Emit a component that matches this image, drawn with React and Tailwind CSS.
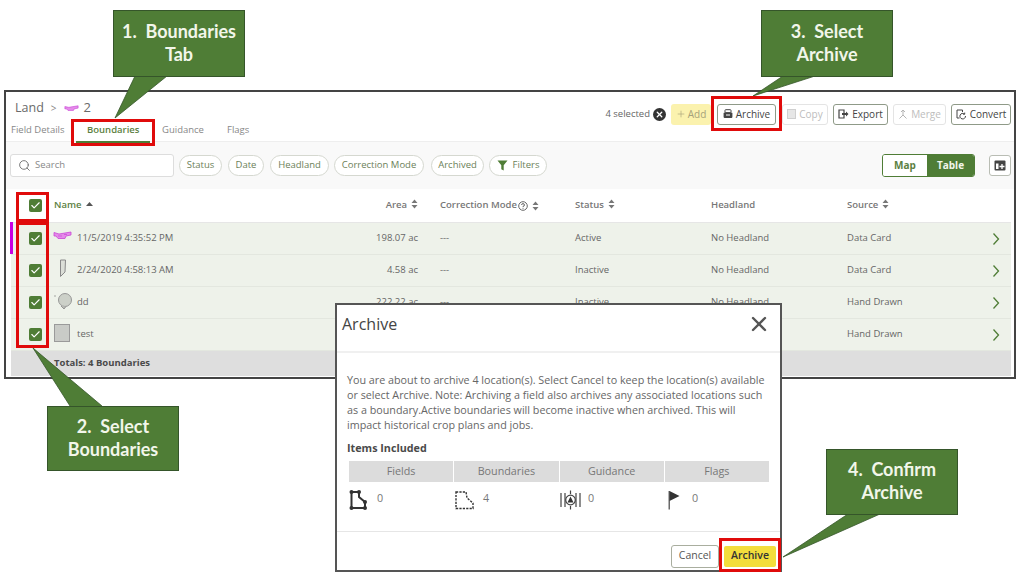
import React from "react";
import { Search, X, Check, Plus } from "lucide-react";

const FONT = "font-['Open_Sans','Noto_Sans',sans-serif]";
const COLS = "grid grid-cols-[43px_286px_78px_157px_136px_136px_148px_1fr] items-center";

const Sort = () => (
  <svg width="7" height="10" viewBox="0 0 7 10" className="inline-block ml-[4px] align-[-1px]">
    <path d="M3.5 0.5 L6.5 4 H0.5 Z M3.5 9.5 L6.5 6 H0.5 Z" fill="#777" />
  </svg>
);

const Box = () => (
  <span className="flex items-center justify-center w-[13px] h-[13px] rounded-[2px] bg-[#4f7d36] ml-[18px]">
    <Check size={11} strokeWidth={2.5} color="#fff" />
  </span>
);

const PurpleShape = () => (
  <svg width="19" height="9" viewBox="0 0 19 9" className="absolute left-[-1px] top-[0px]">
    <path d="M1 1.5 L6 3 L18 1 L18 4 L13 5 L12 7.5 L5 7.5 L3 5 L1 5 Z" fill="#e58bea" stroke="#c948d6" strokeWidth="0.8" />
    <path d="M5 5 H9 M11 3.5 H14" stroke="#c948d6" strokeWidth="0.7" />
  </svg>
);
const SliverShape = () => (
  <svg width="10" height="19" viewBox="0 0 10 19" className="absolute left-[5px] top-[-4px]">
    <path d="M1.5 1 H6.5 L6 13 L1.5 17.5 Z" fill="#dcdfd8" stroke="#8a8a8a" strokeWidth="1" />
  </svg>
);
const BlobShape = () => (
  <svg width="20" height="18" viewBox="0 0 20 18" className="absolute left-[0px] top-[-3px]">
    <circle cx="1" cy="4" r="0.7" fill="#888" />
    <circle cx="11" cy="8" r="6.5" fill="#ccd0c8" stroke="#8f8f8f" strokeWidth="0.9" />
    <path d="M7 14 L10 17 L12 14.5" fill="#b8bbb4" stroke="#8f8f8f" strokeWidth="0.9" />
  </svg>
);
const SquareShape = () => (
  <span className="absolute left-[0px] top-[-3px] w-[16px] h-[18px] bg-[#c9cbc7] border border-[#9a9a9a]" />
);

const Chevron = () => (
  <svg width="8" height="14" viewBox="0 0 8 14" className="ml-[-3px]">
    <path d="M1.5 1.5 L6.5 7 L1.5 12.5" fill="none" stroke="#4f7d36" strokeWidth="1.3" />
  </svg>
);

const rows = [
  { icon: <PurpleShape />, name: "11/5/2019 4:35:52 PM", area: "198.07 ac", dash: "---", status: "Active", head: "No Headland", source: "Data Card" },
  { icon: <SliverShape />, name: "2/24/2020 4:58:13 AM", area: "4.58 ac", dash: "---", status: "Inactive", head: "No Headland", source: "Data Card" },
  { icon: <BlobShape />, name: "dd", area: "222.22 ac", dash: "---", status: "Inactive", head: "No Headland", source: "Hand Drawn" },
  { icon: <SquareShape />, name: "test", area: "", dash: "", status: "", head: "", source: "Hand Drawn" },
];

const ActionBtn = ({ icon, label, off, cls }) => (
  <span className={`flex items-center justify-center gap-[3px] h-[21px] rounded-[3px] border bg-white text-[10px] ${off ? "border-[#e4e4e4] text-[#bdbdbd]" : "border-[#8f9a88] text-[#444]"} ${cls}`}>
    {icon}
    {label}
  </span>
);

const Chip = ({ children, cls }) => (
  <span className={`flex items-center justify-center h-[21px] rounded-full border border-[#d5d8d0] bg-white text-[9.5px] text-[#6c8159] ${cls}`}>
    {children}
  </span>
);

const Callout = ({ cls, children }) => (
  <div className={`absolute z-30 flex items-center justify-center pb-[2px] text-center bg-[#4f7d36] border border-[#35552a] text-[#f2f6ea] font-['Lato',sans-serif] font-bold text-[18px] leading-[23px] ${cls}`}>
    <span>{children}</span>
  </div>
);

const RedBox = ({ cls }) => <div className={`absolute z-40 border-[3px] border-[#e00b0b] ${cls}`} />;

export default function App() {
  return (
    <div className={`relative w-[1024px] h-[577px] bg-white overflow-hidden pt-[90px] pl-[4px] ${FONT}`}>
      {/* Main panel */}
      <div className="w-[1012px] h-[289px] border-2 border-[#444] bg-white overflow-hidden">
        {/* Header */}
        <div className="flex justify-between h-[50px] border-b border-[#eeeeee]">
          <div className="pl-[5px]">
            <div className="flex items-center pl-[4px] pt-[5px] h-[27px] text-[12.5px] text-[#6a6a6a]">
              <span>Land</span>
              <span className="ml-[7px] text-[10px] text-[#888]">&gt;</span>
              <svg width="15" height="7" viewBox="0 0 19 9" className="ml-[7px]">
                <path d="M1 2 L6 3 L18 1 L18 4 L13 5 L12 7 L5 7 L3 5 L1 5 Z" fill="#e58bea" stroke="#c948d6" strokeWidth="0.8" />
              </svg>
              <span className="ml-[5px] text-[13px]">2</span>
            </div>
            <div className="flex items-center text-[9.5px] text-[#888] h-[23px]">
              <span className="w-[76px]">Field Details</span>
              <span className="w-[75px] font-semibold text-[#5c7f42]">Boundaries</span>
              <span className="w-[65px]">Guidance</span>
              <span>Flags</span>
            </div>
          </div>
          <div className="flex items-center h-[44px] pr-[3px] text-[10px]">
            <span className="text-[#666] text-[9.5px]">4 selected</span>
            <span className="flex items-center justify-center ml-[3px] w-[13px] h-[13px] rounded-full bg-[#333]">
              <X size={9} strokeWidth={3.5} color="#fff" />
            </span>
            <span className="flex items-center justify-center ml-[5px] w-[40px] h-[21px] rounded-[3px] bg-[#fbf2ae] text-[#a6a27a]">
              <Plus size={10} strokeWidth={1.5} className="mr-[2px]" />
              Add
            </span>
            <ActionBtn
              cls="ml-[6px] w-[59px]"
              label="Archive"
              icon={
                <svg width="10" height="10" viewBox="0 0 10 10">
                  <rect x="2" y="0.7" width="6" height="3" rx="0.7" fill="none" stroke="#444" />
                  <rect x="0.6" y="3.5" width="8.8" height="5.5" rx="1" fill="#444" />
                  <rect x="3" y="5.5" width="4" height="1" fill="#fff" />
                </svg>
              }
            />
            <ActionBtn
              off
              cls="ml-[6px] w-[46px]"
              label="Copy"
              icon={
                <svg width="9" height="10" viewBox="0 0 9 10">
                  <rect x="0.5" y="0.5" width="8" height="9" fill="#e6e6e6" stroke="#cfcfcf" />
                </svg>
              }
            />
            <ActionBtn
              cls="ml-[5px] w-[55px]"
              label="Export"
              icon={
                <svg width="11" height="10" viewBox="0 0 11 10">
                  <path d="M1 1 H6 V9 H1 Z" fill="none" stroke="#444" strokeWidth="1.2" />
                  <path d="M4 4 H8 V2.5 L10.5 5 L8 7.5 V6 H4 Z" fill="#444" />
                </svg>
              }
            />
            <ActionBtn
              off
              cls="ml-[5px] w-[53px]"
              label="Merge"
              icon={
                <svg width="10" height="10" viewBox="0 0 10 10" fill="none" stroke="#b5b5b5" strokeWidth="1">
                  <path d="M5 1 V6 L1.5 9.5 M5 6 L8.5 9.5 M3 3 L5 1 L7 3" />
                </svg>
              }
            />
            <ActionBtn
              cls="ml-[5px] w-[60px]"
              label="Convert"
              icon={
                <svg width="11" height="11" viewBox="0 0 11 11" fill="none" stroke="#444" strokeWidth="1">
                  <path d="M6.5 1 H1 V9 H3.5 M6.5 1 V3" />
                  <path d="M9.5 7 A2.8 2.8 0 1 1 8.5 5 M8.7 3.6 V5.2 H7" />
                </svg>
              }
            />
          </div>
        </div>

        {/* Toolbar */}
        <div className="flex items-center h-[47px] bg-[#f9f9f9] pl-[4px] pr-[3px]">
          <div className="flex items-center w-[164px] h-[23px] rounded-[3px] border border-[#dddddd] bg-white pl-[7px] text-[9.5px] text-[#888]">
            <Search size={13} strokeWidth={1.6} color="#666" />
            <span className="ml-[4px]">Search</span>
          </div>
          <Chip cls="ml-[5px] w-[43px]">Status</Chip>
          <Chip cls="ml-[6px] w-[36px]">Date</Chip>
          <Chip cls="ml-[6px] w-[59px]">Headland</Chip>
          <Chip cls="ml-[5px] w-[90px]">Correction Mode</Chip>
          <Chip cls="ml-[7px] w-[53px]">Archived</Chip>
          <Chip cls="ml-[5px] w-[58px] gap-[5px]">
            <svg width="11" height="11" viewBox="0 0 11 11">
              <path d="M0.5 0.5 H10.5 L6.7 5.3 V10.5 L4.3 9.3 V5.3 Z" fill="#4f7d36" />
            </svg>
            Filters
          </Chip>
          <div className="flex ml-auto w-[93px] h-[23px] rounded-[3px] border border-[#4f7d36] text-[10px] font-bold overflow-hidden">
            <span className="flex items-center justify-center w-[44px] bg-white text-[#5c7f42]">Map</span>
            <span className="flex items-center justify-center flex-1 bg-[#4f7d36] text-[#f2f6ea]">Table</span>
          </div>
          <span className="flex items-center justify-center ml-[14px] w-[22px] h-[21px] rounded-[3px] border border-[#b9bdb4] bg-white">
            <svg width="12" height="11" viewBox="0 0 12 11">
              <rect x="0.5" y="0.5" width="11" height="10" rx="1" fill="#444" />
              <rect x="2" y="3.5" width="2.5" height="5.5" fill="#fff" />
              <path d="M8 4 V9 M5.5 6.5 H10.5" stroke="#fff" strokeWidth="1.3" />
            </svg>
          </span>
        </div>

        {/* Table */}
        <div className="ml-[5px] mr-[3px] text-[9.5px] text-[#666]">
          <div className={`${COLS} h-[34px] bg-white border-b border-[#e6e6e6] font-semibold`}>
            <Box />
            <span className="text-[#5c7f42]">
              Name
              <svg width="7" height="4" viewBox="0 0 7 4" className="inline-block ml-[4px] align-[2px]">
                <path d="M3.5 0 L7 4 H0 Z" fill="#555" />
              </svg>
            </span>
            <span className="text-right text-[#777]">Area<Sort /></span>
            <span className="pl-[22px] text-[#777] flex items-center">
              Correction Mode
              <svg width="10" height="10" viewBox="0 0 10 10" className="ml-[1px]">
                <circle cx="5" cy="5" r="4.3" fill="none" stroke="#666" />
                <path d="M3.6 4 A1.4 1.4 0 1 1 5 5.4 V6.2 M5 7 V7.8" fill="none" stroke="#666" />
              </svg>
              <Sort />
            </span>
            <span className="text-[#777]">Status<Sort /></span>
            <span className="text-[#777]">Headland</span>
            <span className="text-[#777]">Source<Sort /></span>
            <span />
          </div>
          {rows.map((r) => (
            <div key={r.name} className={`${COLS} h-[32px] bg-[#eef2ea] border-b border-[#e3e7df]`}>
              <Box />
              <span className="relative pl-[23px]">
                {r.icon}
                {r.name}
              </span>
              <span className="text-right">{r.area}</span>
              <span className="pl-[22px]">{r.dash}</span>
              <span>{r.status}</span>
              <span>{r.head}</span>
              <span>{r.source}</span>
              <Chevron />
            </div>
          ))}
          <div className="flex items-center h-[25px] pl-[43px] bg-[#dedede] font-bold text-[#4a4a4a]">
            Totals: 4 Boundaries
          </div>
        </div>
      </div>

      {/* Row marker */}
      <div className="absolute z-10 left-[10px] top-[222px] w-[3px] h-[32px] bg-[#c800e0]" />

      {/* Modal */}
      <div className="absolute z-20 left-[335px] top-[303px] w-[447px] h-[269px] border-2 border-[#555] bg-white flex flex-col">
        <div className="flex items-center justify-between h-[48px] pl-[5px] pr-[9px] pb-[8px] border-b-2 border-[#f0f0f0]">
          <span className="text-[16px] text-[#444]">Archive</span>
          <X size={24} strokeWidth={2.4} color="#555" />
        </div>
        <div className="flex-1 px-[10px] pt-[20px] text-[10.75px] leading-[15px] text-[#666]">
          <p className="whitespace-nowrap">
            You are about to archive 4 location(s). Select Cancel to keep the location(s) available
            <br />
            or select Archive. Note: Archiving a field also archives any associated locations such
            <br />
            as a boundary.Active boundaries will become inactive when archived. This will
            <br />
            impact historical crop plans and jobs.
          </p>
          <div className="mt-[8px] font-bold text-[#4a4a4a] leading-[15px]">Items Included</div>
          <div className="grid grid-cols-4 gap-px w-[420px] mt-[5px] ml-[2px]">
            {["Fields", "Boundaries", "Guidance", "Flags"].map((t) => (
              <span key={t} className="flex items-center justify-center h-[21px] bg-[#dcdcdc] text-[#777]">
                {t}
              </span>
            ))}
          </div>
          <div className="grid grid-cols-4 w-[420px] mt-[8px] ml-[2px] text-[#777]">
            <div className="flex items-start gap-[9px]">
              <svg width="19" height="20" viewBox="0 0 19 20" fill="none" stroke="#333" strokeWidth="2">
                <path d="M2.5 2 H10 V7 L16 12 V18 H2.5 Z" />
                <g fill="#333" stroke="none">
                  <circle cx="2.5" cy="2" r="2" />
                  <circle cx="10" cy="2" r="2" />
                  <circle cx="16" cy="12" r="2" />
                  <circle cx="16" cy="18" r="2" />
                  <circle cx="2.5" cy="18" r="2" />
                </g>
              </svg>
              <span className="mt-[1px]">0</span>
            </div>
            <div className="flex items-start gap-[9px] pl-[1px]">
              <svg width="19" height="20" viewBox="0 0 19 20" fill="none" stroke="#333" strokeWidth="1.4" strokeDasharray="2.2 1.2">
                <path d="M1 2 H11 L12 8 L18 13 V18.5 H1 Z" />
              </svg>
              <span className="mt-[1px]">4</span>
            </div>
            <div className="flex items-start gap-[7px] pl-[1px]">
              <svg width="21" height="20" viewBox="0 0 21 20" fill="none" stroke="#444" strokeWidth="1.2">
                <path d="M1 3 V17 M20 3 V17 M5 3 V17 M16 3 V17" />
                <circle cx="10.5" cy="10" r="4.8" />
                <path d="M10.5 6.5 L13.5 12.5 H7.5 Z" fill="#333" stroke="none" />
                <path d="M10.5 0.5 V4 M10.5 16 V19.5" />
              </svg>
              <span className="mt-[1px]">0</span>
            </div>
            <div className="flex items-start gap-[12px] pl-[4px]">
              <svg width="12" height="20" viewBox="0 0 12 20">
                <path d="M1.2 1 V19.5" stroke="#444" strokeWidth="1.2" />
                <path d="M1.5 1 L11.5 6 L1.5 11 Z" fill="#333" />
              </svg>
              <span className="mt-[1px]">0</span>
            </div>
          </div>
        </div>
        <div className="flex items-center justify-end h-[39px] border-t border-[#e6e6e6] pt-[10px] pr-[4px] text-[10.5px]">
          <span className="flex items-center justify-center w-[48px] h-[23px] rounded-[3px] border border-[#a9ae9f] text-[#555]">Cancel</span>
          <span className="flex items-center justify-center ml-[5px] w-[52px] h-[21px] rounded-[2px] bg-[#f3dd3c] font-semibold text-[#333]">Archive</span>
        </div>
      </div>

      {/* Callout wedges */}
      <svg width="1024" height="577" viewBox="0 0 1024 577" className="absolute z-30 left-0 top-0 pointer-events-none">
        <g fill="#4f7d36" stroke="#35552a" strokeWidth="0.8">
          <path d="M135 76 L115 118 L167 76" />
          <path d="M783 76 L753 96 L815 76" />
          <path d="M70 406 L33 348 L102 406" />
          <path d="M848 514 L783 557 L880 514" />
        </g>
      </svg>
      <Callout cls="left-[113px] top-[10px] w-[132px] h-[67px]">1.&nbsp; Boundaries<br />Tab</Callout>
      <Callout cls="left-[761px] top-[10px] w-[132px] h-[67px]">3.&nbsp; Select<br />Archive</Callout>
      <Callout cls="left-[47px] top-[406px] w-[132px] h-[65px]">2.&nbsp; Select<br />Boundaries</Callout>
      <Callout cls="left-[826px] top-[449px] w-[132px] h-[66px]">4.&nbsp; Confirm<br />Archive</Callout>

      {/* Red highlights */}
      <RedBox cls="left-[71px] top-[119px] w-[84px] h-[27px]" />
      <RedBox cls="left-[711px] top-[96px] w-[71px] h-[35px]" />
      <RedBox cls="left-[16px] top-[192px] w-[33px] h-[30px]" />
      <RedBox cls="left-[16px] top-[222px] w-[33px] h-[126px]" />
      <RedBox cls="left-[719px] top-[538px] w-[62px] h-[34px]" />
      <div className="absolute z-40 left-[76px] top-[141px] w-[74px] h-[2px] bg-[#4f7d36]" />
    </div>
  );
}
